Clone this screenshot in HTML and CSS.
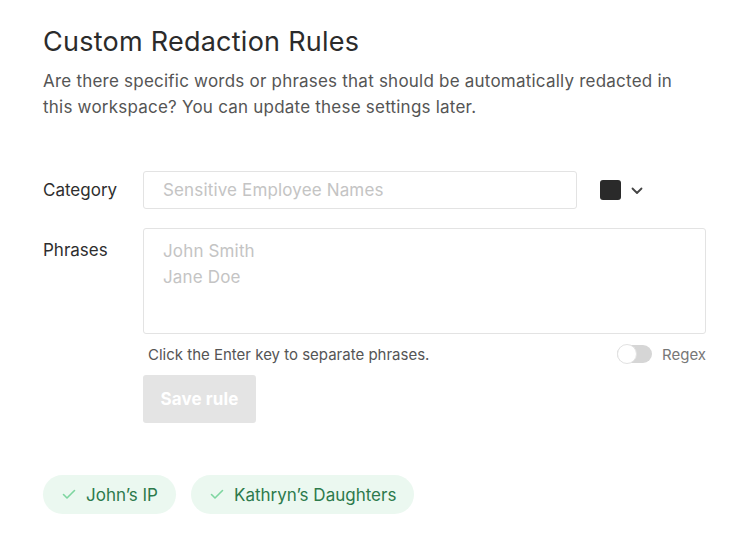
FILE: index.html
```html
<!DOCTYPE html>
<html>
<head>
<meta charset="utf-8">
<link rel="stylesheet" href="styles.css">
</head>
<body>
<div class="page">
  <h1 class="title">Custom Redaction Rules</h1>
  <p class="intro">Are there specific words or phrases that should be automatically redacted in this workspace? You can update these settings later.</p>

  <div class="form">
    <div class="row">
      <div class="label">Category</div>
      <div class="field category-field">
        <div class="input">Sensitive Employee Names</div>
        <div class="color-pick">
          <span class="swatch"></span>
          <svg class="chev" width="12" height="8" viewBox="0 0 12 8"><path d="M1.5 1.5 L6 6 L10.5 1.5" fill="none" stroke="#444" stroke-width="1.8" stroke-linecap="round" stroke-linejoin="round"/></svg>
        </div>
      </div>
    </div>
    <div class="row phrases-row">
      <div class="label phrases-label">Phrases</div>
      <div class="field">
        <div class="textarea"><div>John Smith</div><div>Jane Doe</div></div>
        <div class="helper">
          <span>Click the Enter key to separate phrases.</span>
          <span class="regex"><span class="toggle"><span class="knob"></span></span>Regex</span>
        </div>
        <button class="save">Save rule</button>
      </div>
    </div>
  </div>

  <div class="chips">
    <span class="chip"><svg width="14" height="11" viewBox="0 0 14 11"><path d="M1.5 5.5 L5 9 L12.5 1.5" fill="none" stroke="#7ed6a0" stroke-width="1.6" stroke-linecap="round" stroke-linejoin="round"/></svg>John’s IP</span>
    <span class="chip"><svg width="14" height="11" viewBox="0 0 14 11"><path d="M1.5 5.5 L5 9 L12.5 1.5" fill="none" stroke="#7ed6a0" stroke-width="1.6" stroke-linecap="round" stroke-linejoin="round"/></svg>Kathryn’s Daughters</span>
  </div>
</div>
</body>
</html>
```

FILE: styles.css
```css
* { box-sizing: border-box; }
html, body { margin: 0; padding: 0; background: #fff; }
body { font-family: Inter, "Noto Sans", sans-serif; color: #333; }
.page { padding: 26px 26px 0 43px; }
.title { margin: 0; font-size: 27px; font-weight: 400; color: #2b2b2b; line-height: 32px; letter-spacing: 0.25px; }
.intro { margin: 10px 0 0; font-size: 17px; line-height: 26px; color: #555; width: 660px; letter-spacing: 0.22px; }
.form { margin-top: 51px; display: flex; flex-direction: column; gap: 19px; }
.row { display: flex; }
.label { width: 100px; font-size: 17px; color: #2e2e2e; line-height: 38px; }
.phrases-label { line-height: 26px; padding-top: 9px; }
.field { flex: 1; display: flex; flex-direction: column; }
.category-field { flex-direction: row; align-items: center; }
.input { width: 434px; height: 38px; border: 1px solid #e3e3e3; border-radius: 3px; padding: 0 19px; font-size: 17px; line-height: 36px; color: #c4c4c4; letter-spacing: 0.15px; }
.color-pick { display: flex; align-items: center; margin-left: 23px; gap: 10px; }
.swatch { width: 21px; height: 20px; background: #2a2a2a; border-radius: 3px; }
.chev { margin-top: 1px; }
.textarea { width: 563px; height: 106px; border: 1px solid #e3e3e3; border-radius: 3px; padding: 9px 19px; font-size: 17px; line-height: 26px; color: #c4c4c4; letter-spacing: 0.15px; }
.helper { display: flex; justify-content: space-between; align-items: center; width: 563px; padding-left: 5px; margin-top: 9px; font-size: 15px; color: #555; height: 22px; }
.regex { display: flex; align-items: center; gap: 10px; color: #777; }
.toggle { width: 35px; height: 18px; border-radius: 9px; background: #d6d6d6; position: relative; margin-left: 1px; }
.knob { position: absolute; left: 0; top: -1px; width: 20px; height: 20px; border-radius: 50%; background: #fff; border: 1px solid #e2e2e2; }
.save { margin-top: 10px; width: 113px; height: 48px; border: none; border-radius: 3px; background: #e4e4e4; color: #fff; font-family: Inter, sans-serif; font-size: 17px; font-weight: 700; padding: 0; letter-spacing: 0.1px; }
.chips { margin-top: 52px; display: flex; gap: 15px; }
.chip { display: inline-flex; align-items: center; gap: 10px; height: 39px; padding: 0 18px 0 19px; border-radius: 20px; background: #ebf8f0; color: #2d7a4c; font-size: 17px; }
```
